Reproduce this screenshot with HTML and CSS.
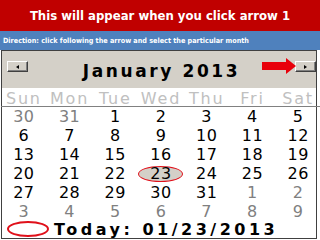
FILE: index.html
```
<!DOCTYPE html>
<html lang="en">
<head>
    <meta charset="UTF-8">
    <title>Calendar - arrow 1</title>
    <link rel="stylesheet" href="styles.css">
</head>
<body>

    <div class="title-bar">This will appear when you click arrow 1</div>
    <div class="direction-bar">Direction: click following the arrow and select the particular month</div>

    <div class="calendar">
        <div class="cal-head">
            <button class="nav-btn prev"><span class="tri-left"></span></button>
            <div class="month">January 2013</div>
            <button class="nav-btn next"><span class="tri-right"></span></button>
            <!-- red pointer drawn over the header -->
            <svg class="pointer" width="34" height="16" viewBox="0 0 34 16">
                <polygon points="0,4 24,4 24,0 34,8 24,16 24,12 0,12" fill="#e8000b"/>
            </svg>
        </div>

        <div class="days">
            <div class="day-name">Sun</div>
            <div class="day-name">Mon</div>
            <div class="day-name">Tue</div>
            <div class="day-name">Wed</div>
            <div class="day-name">Thu</div>
            <div class="day-name">Fri</div>
            <div class="day-name">Sat</div>
        </div>

        <div class="grid" id="grid"></div>

        <div class="today-row">
            <span class="today-ring"></span>
            <span class="today">Today: 01/23/2013</span>
        </div>
    </div>

    <script>
        // Jan 2013 starts on Tuesday; show Dec 30 .. Feb 9
        const grid = document.getElementById('grid');
        const cells = [30, 31];
        for (let d = 1; d <= 31; d++) cells.push(d);
        for (let d = 1; d <= 9; d++) cells.push(d);

        cells.forEach((day, i) => {
            const cell = document.createElement('div');
            cell.className = 'cell';
            const outside = i < 2 || i >= 33;
            if (outside) cell.classList.add('other');

            const num = document.createElement('span');
            num.textContent = day;
            if (!outside && day === 23) num.className = 'selected';
            cell.appendChild(num);
            grid.appendChild(cell);
        });
    </script>

</body>
</html>
```

FILE: styles.css
```
body {
    margin: 0;
    width: 320px;
    height: 240px;
    overflow: hidden;
    background-color: #ffffff;
    font-family: 'DejaVu Sans', Verdana, sans-serif;
}

.title-bar {
    height: 31px;
    line-height: 32px;
    background-color: #c00000;
    color: #ffffff;
    font-family: 'DejaVu Sans Condensed', 'DejaVu Sans', sans-serif;
    font-weight: bold;
    font-size: 13px;
    text-align: center;
}

.direction-bar {
    height: 19px;
    line-height: 19px;
    padding-left: 3px;
    background-color: #4f81bd;
    color: #ffffff;
    font-family: 'DejaVu Sans Condensed', 'DejaVu Sans', sans-serif;
    font-weight: bold;
    font-size: 7.2px;
    white-space: nowrap;
}

.calendar {
    margin: 0 3px 0 1px;
    height: 189px;
    box-sizing: border-box;
    border: 1px solid #404040;
    background-color: #ffffff;
}

.cal-head {
    position: relative;
    display: flex;
    align-items: flex-start;
    height: 37px;
    padding: 10px 0 0 5px;
    box-sizing: border-box;
    background-color: #d4d0c8;
}

.nav-btn {
    width: 21px;
    height: 11px;
    padding: 0;
    display: flex;
    align-items: center;
    justify-content: center;
    background-color: #d4d0c8;
    border: 1px solid;
    border-color: #ffffff #404040 #404040 #ffffff;
    box-shadow: inset -1px -1px 0 #808080;
}

.tri-left, .tri-right {
    width: 0;
    height: 0;
    border-top: 2px solid transparent;
    border-bottom: 2px solid transparent;
}

.tri-left {
    border-right: 3px solid #000000;
}

.tri-right {
    border-left: 3px solid #000000;
}

.month {
    flex: 1;
    margin-top: 2px;
    text-align: center;
    font-weight: bold;
    font-size: 17px;
    letter-spacing: 2.6px;
    line-height: 17px;
    color: #000000;
}

.pointer {
    position: absolute;
    left: 260px;
    top: 7px;
}

.days {
    display: grid;
    grid-template-columns: repeat(7, 1fr);
    height: 19px;
    margin: 0 -5px 0 -1px;
    padding-top: 3px;
    box-sizing: border-box;
    border-bottom: 1px solid #808080;
}

.day-name {
    text-align: center;
    font-size: 16px;
    line-height: 16px;
    letter-spacing: 1.8px;
    color: #c0c0c0;
}

.grid {
    display: grid;
    grid-template-columns: repeat(7, 1fr);
    grid-auto-rows: 19px;
    margin: 0 -5px 0 -1px;
}

.cell {
    display: flex;
    align-items: center;
    justify-content: center;
    font-size: 16px;
    letter-spacing: 0.5px;
    color: #000000;
}

.cell.other {
    color: #808080;
}

.selected {
    width: 43px;
    height: 14px;
    line-height: 14px;
    text-align: center;
    background-color: #d4d0c8;
    border: 1.5px solid #e0101a;
    border-radius: 50%;
}

.today-row {
    display: flex;
    align-items: center;
    height: 16px;
    padding-left: 5px;
}

.today-ring {
    width: 38px;
    height: 12px;
    margin-right: 5px;
    border: 2px solid #e0101a;
    border-radius: 50%;
}

.today {
    font-weight: bold;
    font-size: 16px;
    letter-spacing: 3.5px;
    color: #000000;
}
```
